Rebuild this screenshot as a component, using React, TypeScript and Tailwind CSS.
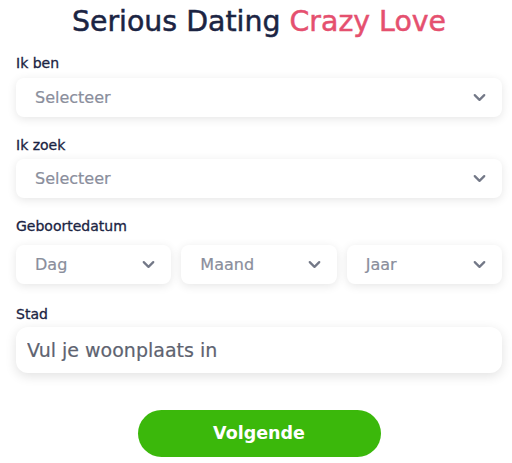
import { ChevronDown } from "lucide-react";

const font = { fontFamily: '"DejaVu Sans", "Noto Sans", sans-serif' };

function Chevron() {
  return <ChevronDown className="h-[19px] w-[19px] shrink-0 text-[#737887]" strokeWidth={2.8} />;
}

function Select({ label, className = "" }: { label: string; className?: string }) {
  return (
    <div
      className={`flex h-[39px] items-center justify-between rounded-lg bg-white pl-[19px] pr-[13px] shadow-[0_2px_10px_rgba(0,0,0,0.10)] ${className}`}
    >
      <span className="text-[16px] text-[#8a8e9c] [-webkit-text-stroke:0.2px_#8a8e9c]">{label}</span>
      <Chevron />
    </div>
  );
}

function Label({ text, className = "" }: { text: string; className?: string }) {
  return (
    <div
      className={`text-[14px] leading-[20px] text-[#1b2443] [-webkit-text-stroke:0.3px_#1b2443] ${className}`}
    >
      {text}
    </div>
  );
}

export default function App() {
  return (
    <div className="h-[463px] w-[512px] bg-white pl-4 pr-[10px]" style={font}>
      <h1 className="pt-[4px] text-center text-[28.4px] leading-[36px] text-[#1b2443] [-webkit-text-stroke:0.5px_#1b2443]">
        Serious Dating{" "}
        <span className="text-[#e5506f] [-webkit-text-stroke:0.5px_#e5506f]">Crazy Love</span>
      </h1>

      <Label text="Ik ben" className="mt-[13px]" />
      <Select label="Selecteer" className="mt-[5px]" />

      <Label text="Ik zoek" className="mt-[18px]" />
      <Select label="Selecteer" className="mt-[4px]" />

      <Label text="Geboortedatum" className="mt-[18px]" />
      <div className="mt-[9px] grid grid-cols-3 gap-[10px]">
        <Select label="Dag" />
        <Select label="Maand" />
        <Select label="Jaar" />
      </div>

      <Label text="Stad" className="mt-[20px]" />
      <input
        className="mt-[3px] h-[46px] w-full rounded-xl bg-white px-[11px] text-[19px] text-[#5e6370] shadow-[0_3px_12px_rgba(0,0,0,0.12)] outline-none placeholder:text-[#5e6370] [-webkit-text-stroke:0.2px_#5e6370]"
        placeholder="Vul je woonplaats in"
      />

      <div className="mt-[37px] flex justify-center">
        <button className="h-[47px] w-[243px] rounded-full bg-[#3bb80b] text-[17.5px] font-semibold text-white">
          Volgende
        </button>
      </div>
    </div>
  );
}
